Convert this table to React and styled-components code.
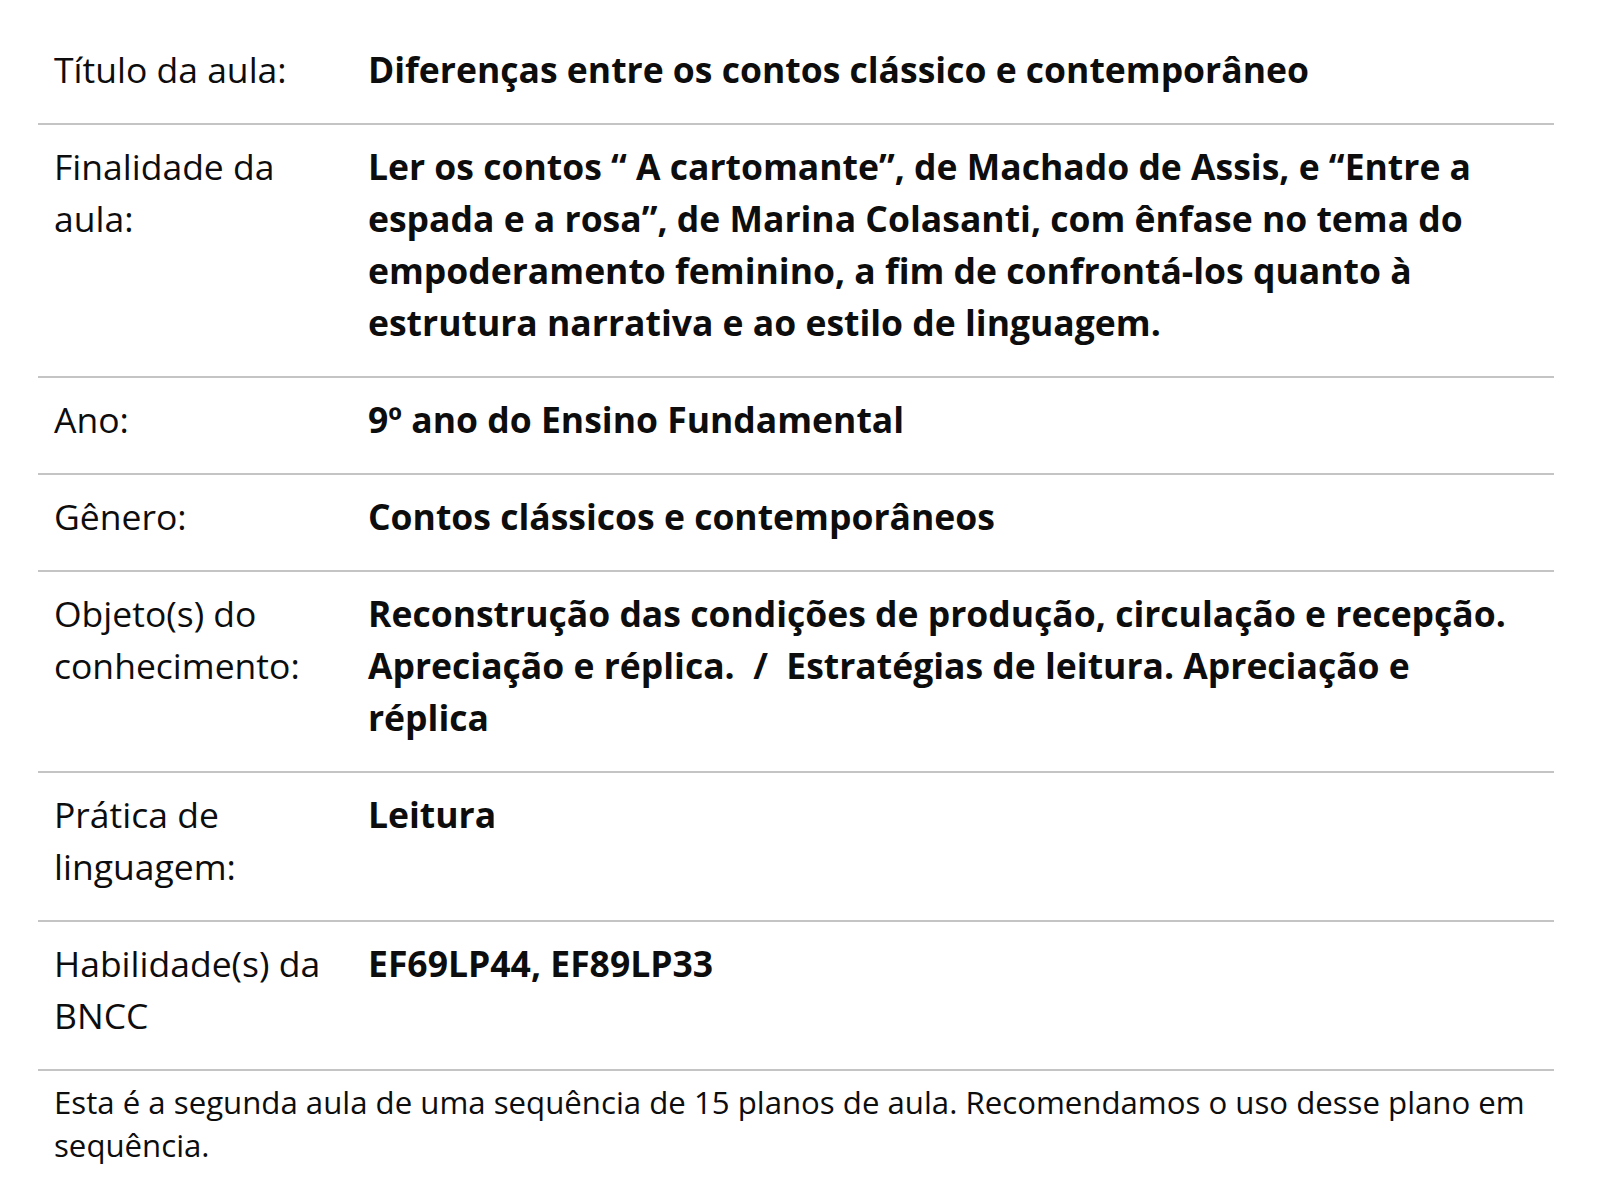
import React from "react";
import styled, { createGlobalStyle } from "styled-components";

const Global = createGlobalStyle`
  html, body { margin: 0; padding: 0; background: #fff; }
  body { font-family: "Open Sans", "Noto Sans", sans-serif; color: #0d0d0d; }
`;

const Page = styled.div`
  padding: 28px 46px 40px 38px;
`;

const Table = styled.div`
  width: 1516px;
  display: grid;
  grid-template-columns: 330px 1fr;
`;

const Label = styled.div`
  font-size: 35.5px;
  line-height: 51.75px;
  font-weight: 400;
  padding: 16px 24px 27.5px 16px;
  border-bottom: 2px solid #c4c4c4;
`;

const Value = styled.div`
  font-size: 35.5px;
  line-height: 51.75px;
  font-weight: 700;
  padding: 16px 16px 27.5px 0;
  border-bottom: 2px solid #c4c4c4;
`;

const Note = styled.p`
  margin: 0;
  padding: 10px 8px 0 16px;
  font-size: 31.2px;
  line-height: 43px;
`;

const rows = [
  ["Título da aula:", "Diferenças entre os contos clássico e contemporâneo"],
  [
    "Finalidade da aula:",
    "Ler os contos “ A cartomante”, de Machado de Assis, e “Entre a espada e a rosa”, de Marina Colasanti, com ênfase no tema do empoderamento feminino, a fim de confrontá-los quanto à estrutura narrativa e ao estilo de linguagem.",
  ],
  ["Ano:", "9º ano do Ensino Fundamental"],
  ["Gênero:", "Contos clássicos e contemporâneos"],
  [
    "Objeto(s) do conhecimento:",
    "Reconstrução das condições de produção, circulação e recepção. Apreciação e réplica.\u00a0 /\u00a0 Estratégias de leitura. Apreciação e réplica",
  ],
  ["Prática de linguagem:", "Leitura"],
  ["Habilidade(s) da BNCC", "EF69LP44, EF89LP33"],
];

export default function App() {
  return (
    <Page>
      <Global />
      <Table>
        {rows.map(([l, v]) => (
          <React.Fragment key={l}>
            <Label>{l}</Label>
            <Value>{v}</Value>
          </React.Fragment>
        ))}
      </Table>
      <Note>
        Esta é a segunda aula de uma sequência de 15 planos de aula. Recomendamos o uso desse plano em sequência.
      </Note>
    </Page>
  );
}
